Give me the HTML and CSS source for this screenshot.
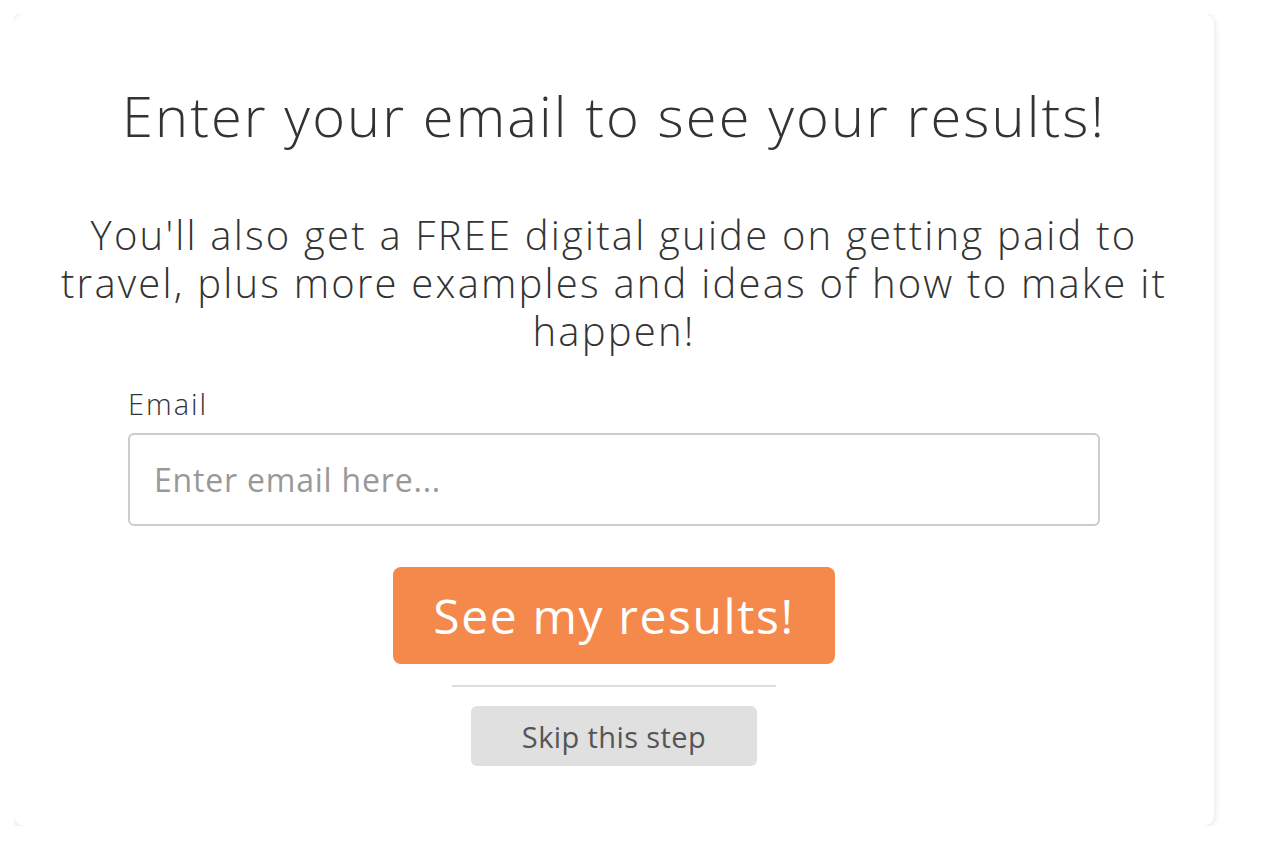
FILE: index.html
```html
<!DOCTYPE html>
<html lang="en">
<head>
    <meta charset="UTF-8">
    <title>See your results</title>
    <link rel="stylesheet" href="styles.css">
</head>
<body>
    <div class="card">
        <h1 class="title">Enter your email to see your results!</h1>
        <p class="lead">You'll also get a FREE digital guide on getting paid to travel, plus more examples and ideas of how to make it happen!</p>

        <!-- Email form -->
        <form class="email-form" action="#" method="POST">
            <label for="email" class="field-label">Email</label>
            <input type="email" id="email" name="email" class="field-input" placeholder="Enter email here...">
            <button type="submit" class="btn-results">See my results!</button>
        </form>

        <hr class="divider">
        <button type="button" class="btn-skip">Skip this step</button>
    </div>
</body>
</html>
```

FILE: styles.css
```css
body {
    margin: 14px;
    background-color: #fff;
    font-family: "Open Sans", Arial, sans-serif;
    color: #333;
}
.card {
    box-sizing: border-box;
    width: 1200px;
    height: 812px;
    padding-top: 67px;
    background-color: #fff;
    border-radius: 10px;
    box-shadow: 0 1px 7px rgba(0, 0, 0, 0.14);
    display: flex;
    flex-direction: column;
    align-items: center;
}
.title {
    margin: 0;
    font-size: 56px;
    line-height: 68px;
    font-weight: 300;
    letter-spacing: 2.1px;
    text-align: center;
}
.lead {
    width: 1140px;
    margin: 62px 0 0;
    font-size: 40px;
    line-height: 48px;
    font-weight: 300;
    letter-spacing: 2.2px;
    text-align: center;
}
.email-form {
    width: 972px;
    margin-top: 31px;
    display: flex;
    flex-direction: column;
    align-items: center;
}
.field-label {
    align-self: flex-start;
    font-size: 29px;
    line-height: 36px;
    font-weight: 300;
    letter-spacing: 2px;
}
.field-input {
    box-sizing: border-box;
    width: 100%;
    height: 93px;
    margin-top: 11px;
    padding: 0 24px;
    border: 2px solid #ccc;
    border-radius: 6px;
    font-family: inherit;
    font-size: 32px;
    letter-spacing: 0.8px;
    color: #333;
}
.field-input::placeholder {
    color: #999;
}
.btn-results {
    width: 442px;
    height: 97px;
    margin-top: 41px;
    border: none;
    border-radius: 8px;
    background-color: #f4894b;
    color: #fff;
    font-family: inherit;
    font-size: 48px;
    letter-spacing: 1.6px;
}
.divider {
    width: 324px;
    margin: 21px 0 0;
    border: none;
    border-top: 2px solid #ddd;
}
.btn-skip {
    width: 286px;
    height: 60px;
    margin-top: 19px;
    border: none;
    border-radius: 6px;
    background-color: #e0e0e0;
    color: #555;
    font-family: inherit;
    font-size: 29px;
    letter-spacing: 0.4px;
}
```
